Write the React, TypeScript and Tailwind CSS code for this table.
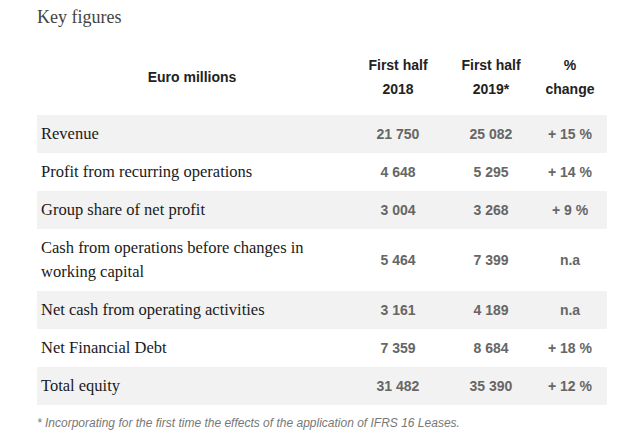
import React from 'react';

const rows = [
  { label: 'Revenue', a: '21 750', b: '25 082', c: '+ 15 %' },
  { label: 'Profit from recurring operations', a: '4 648', b: '5 295', c: '+ 14 %' },
  { label: 'Group share of net profit', a: '3 004', b: '3 268', c: '+ 9 %' },
  { label: 'Cash from operations before changes in working capital', a: '5 464', b: '7 399', c: 'n.a' },
  { label: 'Net cash from operating activities', a: '3 161', b: '4 189', c: 'n.a' },
  { label: 'Net Financial Debt', a: '7 359', b: '8 684', c: '+ 18 %' },
  { label: 'Total equity', a: '31 482', b: '35 390', c: '+ 12 %' },
];

const serif = "font-['Liberation_Serif',serif]";
const sans = "font-['Liberation_Sans',Arial,sans-serif]";

export default function App() {
  return (
    <div className="w-[629px] h-[437px] bg-white pl-[37px] pt-[5px] overflow-hidden">
      <h2 className={`${serif} text-[18px] leading-[24px] text-[#444]`}>Key figures</h2>
      <div className="w-[570px] mt-[10px]">
        <div className={`grid grid-cols-[310px_102px_84px_74px] h-[76px] items-center ${sans} text-[14px] leading-[24px] font-bold text-[#222] text-center`}>
          <div>Euro millions</div>
          <div>First half<br />2018</div>
          <div>First half<br />2019*</div>
          <div>%<br />change</div>
        </div>
        {rows.map((r, i) => (
          <div
            key={r.label}
            className={`grid grid-cols-[310px_102px_84px_74px] items-center py-[7px] ${i % 2 === 0 ? 'bg-[#f2f2f2]' : 'bg-white'}`}
          >
            <div className={`${serif} text-[16.5px] leading-[24px] text-[#1a1a1a] pl-[4px] pr-[4px]`}>{r.label}</div>
            <div className={`${sans} text-[14px] font-bold text-[#666] text-center`}>{r.a}</div>
            <div className={`${sans} text-[14px] font-bold text-[#666] text-center`}>{r.b}</div>
            <div className={`${sans} text-[14px] font-bold text-[#666] text-center`}>{r.c}</div>
          </div>
        ))}
        <p className={`${sans} italic text-[12px] leading-[16px] text-[#777] mt-[10px]`}>
          * Incorporating for the first time the effects of the application of IFRS 16 Leases.
        </p>
      </div>
    </div>
  );
}
